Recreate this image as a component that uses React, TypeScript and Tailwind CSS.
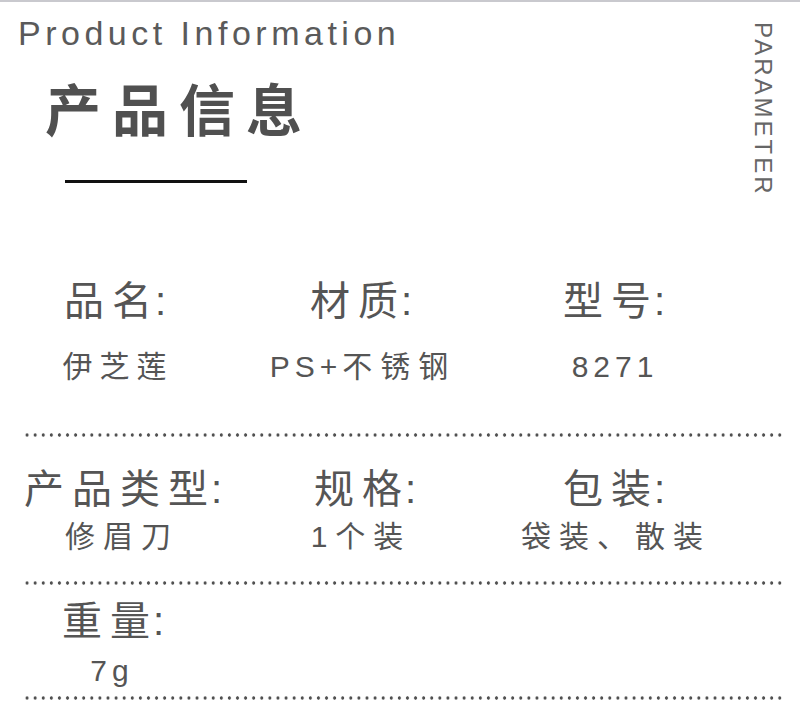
import React from 'react';

const font = "font-['Liberation_Sans','Noto_Sans_CJK_SC',sans-serif]";

const Dots: React.FC<{ className?: string }> = ({ className = '' }) => (
  <div
    className={`ml-[23px] mr-[16px] h-[4px] bg-[radial-gradient(circle,#505050_1.4px,transparent_1.9px)] bg-[length:8.1px_4px] bg-repeat-x ${className}`}
  ></div>
);

// the colon sits close to the last character
const Label: React.FC<{ text: string }> = ({ text }) =>
  text ? (
    <div>
      <span className="tracking-[8px]">{text.slice(0, -1)}</span>
      <span className="tracking-[3px]">{text.slice(-1)}</span>:
    </div>
  ) : (
    <div></div>
  );

const Labels: React.FC<{ items: string[]; className?: string }> = ({ items, className = '' }) => (
  <div className={`grid text-center leading-none text-[40px] ${className}`}>
    {items.map((t, i) => (
      <Label key={i} text={t} />
    ))}
  </div>
);

const Values: React.FC<{ items: string[]; className?: string }> = ({ items, className = '' }) => (
  <div className={`grid text-center leading-none text-[30px] ${className}`}>
    {items.map((t, i) => (
      <div key={i}>{t}</div>
    ))}
  </div>
);

const App: React.FC = () => {
  return (
    <div className={`w-[800px] h-[709px] bg-white border-t-2 border-[#c9c9ce] overflow-hidden text-[#555] ${font}`}>
      {/* header */}
      <div className="flex justify-between items-start h-[181px]">
        <div className="pl-[18px] pt-[14px]">
          <div className="text-[34px] leading-none tracking-[4.5px] text-[#5a5a5a]">Product Information</div>
          <div className="mt-[34px] pl-[27px] text-[56px] leading-none font-bold tracking-[11px] text-[#505050]">
            产品信息
          </div>
          <div className="ml-[47px] mt-[40px] w-[182px] h-[3px] bg-[#111]"></div>
        </div>
        <div className="mr-[25px] mt-[20px] [writing-mode:vertical-rl] text-[24px] leading-none tracking-[3px] text-[#666]">
          PARAMETER
        </div>
      </div>

      {/* rows */}
      <Labels className="mt-[98px] grid-cols-[230px_262px_244px]" items={['品名', '材质', '型号']} />
      <div className="mt-[31px] grid grid-cols-[236px_254px_250px] text-center leading-none text-[30px]">
        <div className="tracking-[7px]">伊芝莲</div>
        <div className="tracking-[5px]">
          PS+<span className="tracking-[8px]">不锈钢</span>
        </div>
        <div className="tracking-[5px]">8271</div>
      </div>
      <Dots className="mt-[51px]" />

      <Labels className="mt-[32px] grid-cols-[246px_238px_260px]" items={['产品类型', '规格', '包装']} />
      <Values
        className="mt-[13px] grid-cols-[244px_234px_276px] tracking-[8px]"
        items={['修眉刀', '1个装', '袋装、散装']}
      />
      <Dots className="mt-[29px]" />

      <Labels className="mt-[16px] grid-cols-[226px_250px_250px]" items={['重量', '', '']} />
      <Values className="mt-[15px] grid-cols-[224px_250px_250px] tracking-[5px]" items={['7g', '', '']} />
      <Dots className="mt-[10px]" />
    </div>
  );
};

export default App;
